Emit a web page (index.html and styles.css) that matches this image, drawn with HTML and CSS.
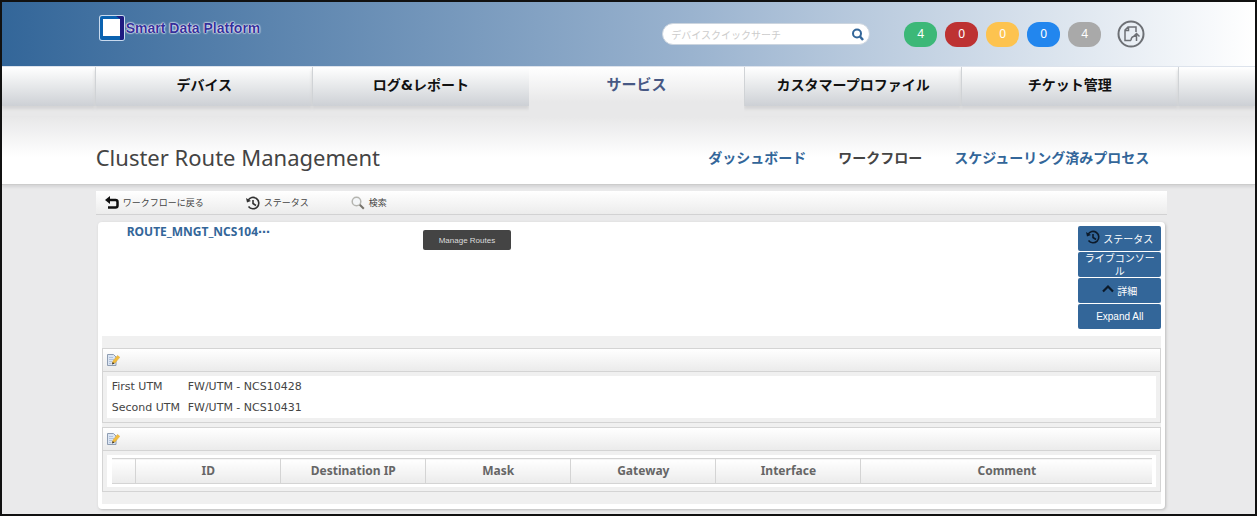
FILE: index.html
```
<!DOCTYPE html>
<html lang="ja">
<head>
    <meta charset="UTF-8">
    <title>Cluster Route Management</title>
    <link rel="stylesheet" href="styles.css">
</head>
<body>
    <header class="topbar">
        <div class="wrap topbar-inner">
            <a class="logo" href="#">
                <svg width="28" height="28" viewBox="0 0 28 28">
                    <rect x="1" y="1" width="26" height="26" rx="3" fill="#c9daee"/>
                    <rect x="2" y="2" width="24" height="24" rx="2" fill="#0a62b0"/>
                    <path d="M18 2h6a2 2 0 0 1 2 2v20a2 2 0 0 1-2 2h-2V5z" fill="#1f1a80"/>
                    <rect x="5" y="5" width="17" height="17" fill="#fff"/>
                </svg>
                <span>Smart Data Platform</span>
            </a>
            <form class="search">
                <input type="text" aria-label="デバイスクイックサーチ" placeholder="デバイスクイックサーチ">
                <button type="button" aria-label="Search">
                    <svg width="12" height="13" viewBox="0 0 12 13" fill="none" stroke="#336699" stroke-width="2">
                        <circle cx="5" cy="5.500" r="4"/>
                        <path d="M8 8.500l3 3.500" stroke-width="2.500"/>
                    </svg>
                </button>
            </form>
            <div class="badges">
                <span class="badge green">4</span>
                <span class="badge red">0</span>
                <span class="badge yellow">0</span>
                <span class="badge blue">0</span>
                <span class="badge gray">4</span>
            </div>
            <button class="export" type="button" aria-label="Export">
                <svg width="28" height="28" viewBox="0 0 28 28" fill="none" stroke="#6d7075" stroke-width="1.500">
                    <circle cx="14" cy="14" r="12.500" stroke-width="2"/>
                    <path d="M14 20.500H8V10l3-3h8v5M8 10.500h3.500V7M14 20.500c0-3 2-4.500 5-4.500M19.500 21v-7M16.500 16.500l3-3 3 3"/>
                </svg>
            </button>
        </div>
    </header>

    <nav class="tabs">
        <div class="tab-edge"></div>
        <a class="tab" href="#">デバイス</a>
        <a class="tab" href="#">ログ&amp;レポート</a>
        <a class="tab active" href="#">サービス</a>
        <a class="tab" href="#">カスタマープロファイル</a>
        <a class="tab" href="#">チケット管理</a>
        <div class="tab-edge"></div>
    </nav>

    <section class="title-area">
        <div class="wrap title-inner">
            <h1>Cluster Route Management</h1>
            <nav class="subnav">
                <a href="#">ダッシュボード</a>
                <a class="current" href="#">ワークフロー</a>
                <a href="#">スケジューリング済みプロセス</a>
            </nav>
        </div>
    </section>

    <main class="wrap content">
        <div class="toolbar">
            <button type="button">
                <svg width="14" height="14" viewBox="0 0 14 14">
                    <path d="M4 4h6.500q2 0 2 2v3.500q0 2-2 2H3" fill="none" stroke="#111" stroke-width="2.500"/>
                    <path d="M0 4l5-4v8z" fill="#111"/>
                </svg>
                ワークフローに戻る
            </button>
            <button type="button">
                <svg width="14" height="14" viewBox="0 0 14 14" fill="none" stroke="#333" stroke-width="1.600">
                    <path d="M2 4.500A5.700 5.700 0 1 1 2.500 10.500M7 4v3.500l3 2"/>
                    <path d="M0 2l1 4.500 4-1.500z" fill="#333" stroke="none"/>
                </svg>
                ステータス
            </button>
            <button type="button">
                <svg width="14" height="14" viewBox="0 0 14 14" fill="none">
                    <circle cx="5.500" cy="5.500" r="4.300" fill="#f4f6f8" stroke="#b5b5b0" stroke-width="1.500"/>
                    <path d="M8.800 8.800l4 4" stroke="#77736b" stroke-width="2"/>
                </svg>
                検索
            </button>
        </div>

        <div class="panel">
            <div class="instance">
                <a class="instance-name" href="#">ROUTE_MNGT_NCS104⋯</a>
                <button class="manage" type="button">Manage Routes</button>
                <div class="actions">
                    <button type="button">
                        <svg class="raised" width="14" height="14" viewBox="0 0 14 14" fill="none" stroke="#0c1a2a" stroke-width="1.600">
                            <path d="M2 4.500A5.700 5.700 0 1 1 2.500 10.500M7 4v3.500l3 2"/>
                            <path d="M0 2l1 4.500 4-1.500z" fill="#0c1a2a" stroke="none"/>
                        </svg>
                        ステータス
                    </button>
                    <button type="button" class="two-line">ライブコンソール</button>
                    <button type="button">
                        <svg class="raised" width="12" height="12" viewBox="0 0 12 12" fill="none" stroke="#0c1a2a" stroke-width="2.200">
                            <path d="M1 8.500l5-5 5 5"/>
                        </svg>
                        詳細
                    </button>
                    <button type="button">Expand All</button>
                </div>
            </div>

            <div class="details">
                <section class="box">
                    <div class="box-head">
                        <button type="button" aria-label="Edit">
                            <svg width="13" height="12" viewBox="0 0 13 12">
                                <path d="M.5.500h6l2.500 2.500v8.500H.5z" fill="#dbe5f3" stroke="#8e9db3"/>
                                <path d="M2 3.500h4M2 5.500h5M2 7.500h3M2 9.500h2" stroke="#b3c3dc"/>
                                <path d="M5 10l1-3 4.500-5.500 2.300 1.800L8 9z" fill="#f2bd3c" stroke="#d9a43c" stroke-width=".5"/>
                                <path d="M5 10.500l.7-2.500 1.800 1.500z" fill="#333"/>
                            </svg>
                        </button>
                    </div>
                    <div class="box-body">
                        <dl class="fields">
                            <dt>First UTM</dt>
                            <dd>FW/UTM - NCS10428</dd>
                            <dt>Second UTM</dt>
                            <dd>FW/UTM - NCS10431</dd>
                        </dl>
                    </div>
                </section>

                <section class="box">
                    <div class="box-head">
                        <button type="button" aria-label="Edit">
                            <svg width="13" height="12" viewBox="0 0 13 12">
                                <path d="M.5.500h6l2.500 2.500v8.500H.5z" fill="#dbe5f3" stroke="#8e9db3"/>
                                <path d="M2 3.500h4M2 5.500h5M2 7.500h3M2 9.500h2" stroke="#b3c3dc"/>
                                <path d="M5 10l1-3 4.500-5.500 2.300 1.800L8 9z" fill="#f2bd3c" stroke="#d9a43c" stroke-width=".5"/>
                                <path d="M5 10.500l.7-2.500 1.800 1.500z" fill="#333"/>
                            </svg>
                        </button>
                    </div>
                    <div class="box-body table-body">
                        <table class="routes">
                            <thead>
                                <tr>
                                    <th class="col-check"></th>
                                    <th>ID</th>
                                    <th>Destination IP</th>
                                    <th>Mask</th>
                                    <th>Gateway</th>
                                    <th>Interface</th>
                                    <th class="col-comment">Comment</th>
                                </tr>
                            </thead>
                        </table>
                    </div>
                </section>
            </div>
        </div>
    </main>
</body>
</html>
```
FILE: styles.css
```
* {
    box-sizing: border-box;
    margin: 0;
    padding: 0;
}
body {
    min-height: 100vh;
    border: 2px solid #111;
    background-color: #eaeaeb;
    font-family: "DejaVu Sans", "Noto Sans CJK JP", sans-serif;
    font-size: 11px;
    color: #444;
}
a {
    text-decoration: none;
    color: #336699;
}
button {
    border: none;
    background: none;
    font: inherit;
    color: inherit;
    cursor: pointer;
}
svg {
    display: block;
    flex-shrink: 0;
}
.wrap {
    width: 86%;
    margin: 0 auto;
}

/* header */
.topbar {
    height: 65px;
    background: linear-gradient(to right, #336699, #9ab3cf 55%, #fff);
    border-bottom: 1px solid #dde3ec;
}
.topbar-inner {
    display: flex;
    align-items: center;
}
.logo {
    display: flex;
    align-items: center;
    height: 52px;
    padding-left: 8px;
    font-family: "Liberation Sans", Arial, sans-serif;
    font-size: 14px;
    font-weight: bold;
    color: #35309a;
    text-shadow: 0 0 1px #fff, 0 0 2px #fff, 0 0 2px #fff;
}
.search {
    display: flex;
    align-items: center;
    width: 208px;
    height: 22px;
    margin-top: 12px;
    margin-left: auto;
    padding: 0 5px 0 8px;
    border: 1px solid #ccd5df;
    border-radius: 11px;
    background-color: #fff;
}
.search input {
    flex: 1;
    min-width: 0;
    border: none;
    outline: none;
    background: none;
    font-family: "Noto Sans CJK JP", sans-serif;
    font-size: 10px;
}
.search input::placeholder {
    color: #ccc;
}
.badges {
    display: flex;
    gap: 8px;
    margin-top: 12px;
    margin-left: 34px;
}
.badge {
    width: 33px;
    height: 25px;
    border-radius: 12px;
    font-family: "Noto Sans", sans-serif;
    font-size: 12px;
    line-height: 24px;
    text-align: center;
    color: #fff;
}
.green { background-color: #3cb878; }
.red { background-color: #bd3232; }
.yellow { background-color: #fdc34f; }
.blue { background-color: #2286ee; }
.gray { background-color: #a9a9a9; }
.export {
    margin: 12px 22px 0 16px;
}

/* main tabs */
.tabs {
    display: flex;
    height: 50px;
    background-color: #e8e8e9;
}
.tab,
.tab-edge {
    height: 39px;
    background: linear-gradient(#fff, #e6e8ea 50%, #cdd0d5);
    box-shadow: 0 3px 3px #d4d4d5;
}
.tab-edge {
    flex: 77;
}
.tab-edge:first-child {
    flex: 94;
}
.tab {
    flex: 217;
    border-left: 1px solid #d0d3d6;
    font-size: 14px;
    font-weight: bold;
    line-height: 37px;
    text-align: center;
    color: #111;
}
.tab-edge:last-child {
    border-left: 1px solid #d0d3d6;
}
.tab.active {
    position: relative;
    height: 50px;
    border-left: none;
    background: linear-gradient(#fff, #e8e8e9 35px);
    box-shadow: none;
    font-size: 15px;
    color: #475884;
}

/* page title */
.title-area {
    height: 68px;
    background: linear-gradient(#e8e8e9, #fff 40px);
    border-bottom: 1px solid #ccc;
    box-shadow: 0 2px 3px #d3d3d4;
}
.title-inner {
    display: flex;
    align-items: center;
    justify-content: space-between;
    height: 100%;
    padding: 12px 18px 0 6px;
}
h1 {
    font-family: "Noto Sans", sans-serif;
    font-size: 22px;
    font-weight: normal;
    white-space: nowrap;
}
.subnav {
    display: flex;
    gap: 32px;
    font-size: 14px;
    font-weight: bold;
    white-space: nowrap;
}
.subnav .current {
    color: #444;
}

/* toolbar */
.content {
    padding: 6px 0 0 6px;
}
.toolbar {
    display: flex;
    align-items: center;
    gap: 42px;
    height: 24px;
    padding-left: 9px;
    background: linear-gradient(#fff, #ececec);
    border-bottom: 1px solid #d2d2d3;
    font-size: 9px;
}
.toolbar button {
    display: flex;
    align-items: center;
    gap: 4px;
}

/* panel */
.panel {
    margin: 7px 2px 0;
    padding: 4px 4px 5px;
    background-color: #fff;
    border-radius: 4px;
    box-shadow: 1px 1px 3px #bbb;
}
.instance {
    display: flex;
    align-items: flex-start;
    height: 110px;
    padding-left: 25px;
}
.instance-name {
    width: 296px;
    font-family: "Noto Sans", "DejaVu Sans", sans-serif;
    font-size: 12px;
    font-weight: bold;
    line-height: 12px;
}
.manage {
    height: 20px;
    margin-top: 4px;
    padding: 0 16px;
    border-radius: 2px;
    background-color: #444;
    font-family: "Liberation Sans", Arial, sans-serif;
    font-size: 8px;
    color: #ddd;
}
.actions {
    display: flex;
    flex-direction: column;
    gap: 1px;
    width: 83px;
    margin-left: auto;
}
.actions button {
    display: flex;
    align-items: center;
    justify-content: center;
    gap: 3px;
    height: 25px;
    border-radius: 2px;
    background-color: #336699;
    font-family: "Liberation Sans", "Noto Sans CJK JP", sans-serif;
    font-size: 10px;
    color: #fff;
}
.actions .two-line {
    padding: 0 6px;
    overflow: hidden;
    line-height: 13px;
}
.raised {
    margin-bottom: 4px;
}
.details {
    padding: 12px 0;
    background-color: #f0f0f0;
}
.box {
    border: 1px solid #d4d4d4;
}
.box + .box {
    margin-top: 4px;
}
.box-head {
    height: 23px;
    padding: 5px 4px;
    background: linear-gradient(#fff, #ebebeb);
    border-bottom: 1px solid #d4d4d4;
}
.box-body {
    margin: 4px;
    background-color: #fff;
}
.fields {
    display: grid;
    grid-template-columns: 76px 1fr;
    padding: 0 5px;
    line-height: 21px;
}
.table-body {
    padding: 3px 4px 3px 5px;
}
.routes {
    width: 100%;
    border-collapse: collapse;
    table-layout: fixed;
}
.routes th {
    height: 25px;
    border: 1px solid #d4d4d4;
    border-right: none;
    background: linear-gradient(#fff, #ebebeb);
    font-family: "Noto Sans", sans-serif;
    font-size: 12px;
    line-height: 14px;
    color: #666;
}
.routes th:first-child {
    border-left: none;
}
.col-check {
    width: 24px;
}
.col-comment {
    width: 28%;
}
```
